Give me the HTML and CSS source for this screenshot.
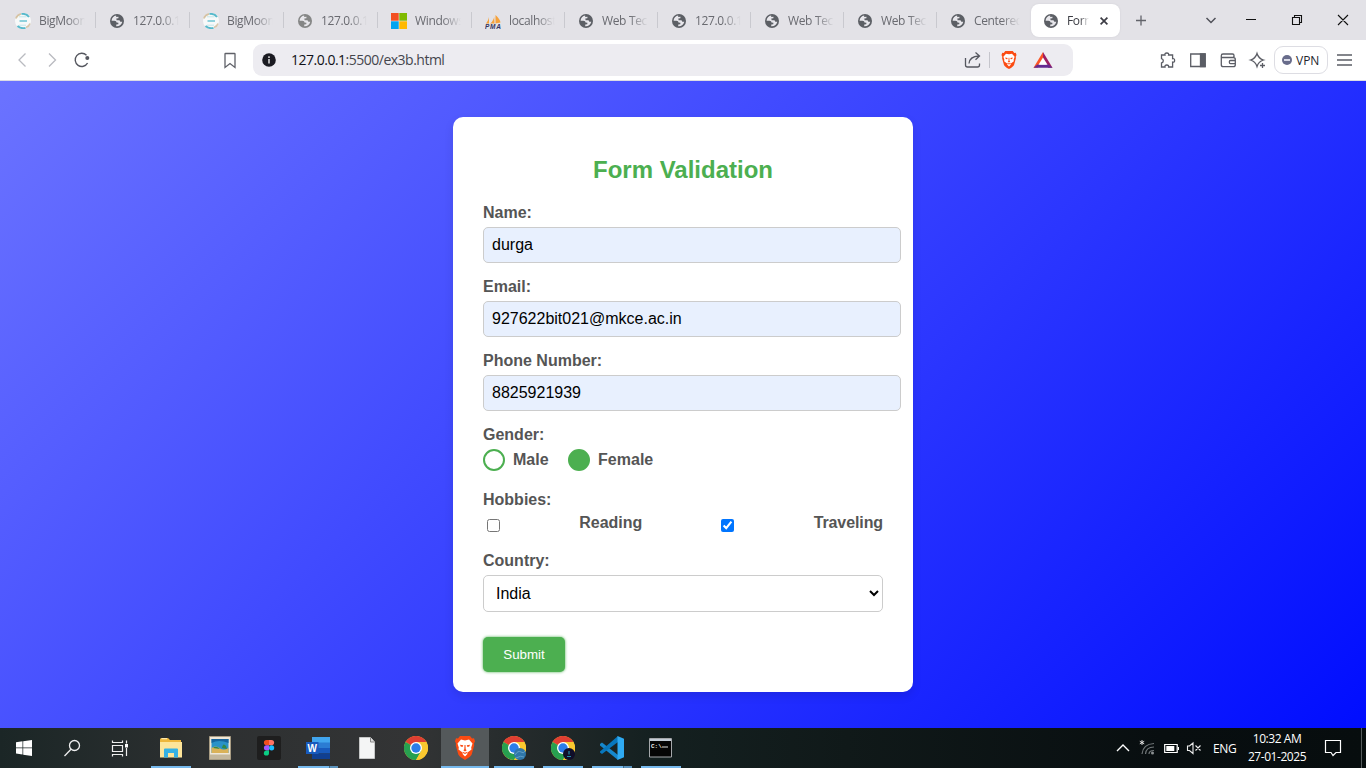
FILE: index.html
```html
<!DOCTYPE html>
<html lang="en">
<head>
<meta charset="utf-8">
<title>Form Validation</title>
<link rel="stylesheet" href="styles.css">
</head>
<body>
<svg width="0" height="0" class="defs">
  <defs>
    <symbol id="globe" viewBox="0 0 14 14"><circle cx="7" cy="7" r="7" fill="currentColor"/><path d="M6.2 1.6C3.700 2 1.700 4 1.600 6.700L4.500 6.700Q6.600 6.800 6.500 8.600L8.400 8.700 8.300 10.200 6.300 10.400 6.200 12.300C9.300 12.600 11.800 10.600 12.300 7.800L10.300 7.700 9.500 6.300 6.600 6.200 6.300 4.500 8.400 4.200 8.500 2.800 6.200 2.900Z" fill="#e8e7ec"/></symbol>
    <symbol id="moon" viewBox="0 0 16 16"><circle cx="8" cy="8" r="8" fill="#f7f9f9"/><path d="M.8 5.500A7.500 7.500 0 0 1 6 .9" fill="none" stroke="#d6c3a4" stroke-width="1.600"/><path d="M6.500 1Q11.500 .3 14 4M2.500 13Q6 16 10.500 14.800" fill="none" stroke="#56b9cb" stroke-width="1.900"/><path d="M11 14.500Q14 13.500 15 10.500" fill="none" stroke="#d8c6aa" stroke-width="1.600"/><path d="M4 3.800h7.500M4 12.200h7" stroke="#c2e5ea" stroke-width="1"/><path d="M4.500 8h7.500" stroke="#8fd1dc" stroke-width="2"/></symbol>
    <symbol id="lion" viewBox="0 0 20 24"><path d="M5 0h10l2 2.500 2-.2 1 3-1 2.200.2 2-2.500 9Q16 20.500 10 24 4 20.500 3.300 18.500L.8 9.500 1 7.500 0 5.300l1-3 2 .2z" fill="#fb4b12"/><path d="M6 3.600l4 .8 4-.8 3.500 4-1.300 3.900.3 2-4 3-.3 1.800L10 20.500l-2.200-2.200-.3-1.800-4-3 .3-2L2.500 7.600z" fill="#fff"/><path d="M5 8.700l3.300.6-.8 1.700-1.800-.4zM15 8.700l-3.300.6.8 1.700 1.800-.4zM9.500 9h1l.2 4.300 1 .9-1.700 1.200-1.700-1.200 1-.9zM7.500 15.800l2.500 1 2.500-1-.5 1.200-2 1-2-1z" fill="#fb4b12"/></symbol>
    <symbol id="chrome" viewBox="0 0 24 24"><circle cx="12" cy="12" r="12" fill="#fbc82f"/><path d="M12 12L1.600 6A12 12 0 0 1 22.400 6z" fill="#df3e32"/><path d="M1.600 6A12 12 0 0 0 12 24L17.200 15z" fill="#27a050"/><path d="M12 6h10.400A12 12 0 0 1 12 24l5.200-9z" fill="#fbc82f"/><circle cx="12" cy="12" r="6" fill="#fff"/><circle cx="12" cy="12" r="4.700" fill="#2b7de9"/></symbol>
  </defs>
</svg>

<header class="tabs">
  <div class="tab wideicon"><svg class="fav big"><use href="#moon"/></svg><span>BigMoon</span></div>
  <div class="tab"><svg class="fav"><use href="#globe"/></svg><span>127.0.0.1</span></div>
  <div class="tab wideicon"><svg class="fav big"><use href="#moon"/></svg><span>BigMoon</span></div>
  <div class="tab"><svg class="fav light"><use href="#globe"/></svg><span>127.0.0.1</span></div>
  <div class="tab wideicon"><svg class="fav big" viewBox="0 0 16 16"><path d="M0 0h7.700v7.700H0z" fill="#f25022"/><path d="M8.300 0H16v7.700H8.300z" fill="#7fba00"/><path d="M0 8.300h7.700V16H0z" fill="#00a4ef"/><path d="M8.300 8.300H16V16H8.300z" fill="#ffb900"/></svg><span>Windows</span></div>
  <div class="tab narrow wideicon"><svg class="fav big" viewBox="0 0 16 16"><path d="M4 1.500Q4.500 6 1 10.500H4zM9 .5Q10 7 5 10.500H9.500zM10.500 2Q15 6 15.500 9.500L10.500 10.500z" fill="#f6a13a"/><text x="0" y="15.500" class="pma" textLength="16">PMA</text></svg><span>localhost</span></div>
  <div class="tab narrow"><svg class="fav"><use href="#globe"/></svg><span>Web Tech</span></div>
  <div class="tab narrow"><svg class="fav"><use href="#globe"/></svg><span>127.0.0.1</span></div>
  <div class="tab narrow"><svg class="fav"><use href="#globe"/></svg><span>Web Tech</span></div>
  <div class="tab narrow"><svg class="fav"><use href="#globe"/></svg><span>Web Tech</span></div>
  <div class="tab narrow last"><svg class="fav"><use href="#globe"/></svg><span>Centered</span></div>
  <div class="tab active"><svg class="fav"><use href="#globe"/></svg><span>Form</span><svg class="close" viewBox="0 0 8 8"><path d="M.6.600l6.800 6.800M7.400.600L.6 7.400" stroke="#3c3c44" stroke-width="1.700"/></svg></div>
  <svg class="window" width="246" height="40" viewBox="1120 0 246 40" fill="none"><path d="M1136 20.500h10M1141 15.500v10" stroke="#62636a" stroke-width="1.300"/><path d="M1206.500 18l4.500 4.500 4.500-4.500" stroke="#505158" stroke-width="1.500"/><path d="M1246 19.500h10M1292.500 17.500h7v7h-7zM1294.500 17.500v-2h7v7h-2M1338 15l10 10M1348 15l-10 10" stroke="#111" stroke-width="1.100"/></svg>
</header>

<nav class="toolbar">
  <svg class="nav-icons" width="253" height="40" viewBox="0 40 253 40" fill="none">
    <path d="M25.500 53.500L19 60l6.500 6.500M49 53.500l6.500 6.500-6.500 6.500" stroke="#b9bac0" stroke-width="1.300"/>
    <path d="M86.500 55.200A6.600 6.600 0 1 0 87.600 63" stroke="#55575f" stroke-width="1.400"/><circle cx="87.300" cy="58" r="2" fill="#55575f"/>
    <path d="M225.500 53.500h9q.5 0 .5.500v13.500l-5-4-5 4V54q0-.5.500-.5z" stroke="#5f6168" stroke-width="1.300"/>
  </svg>
  <div class="address">
    <svg width="14" height="14" viewBox="0 0 14 14"><circle cx="7" cy="7" r="6.800" fill="#1b1b22"/><path d="M7 6v4.500M7 3.300v1.600" stroke="#eee" stroke-width="1.400"/></svg>
    <p class="url"><b>127.0.0.1</b>:5500/ex3b.html</p>
    <svg class="share" width="90" height="20" viewBox="963 50 90 20" fill="none"><path d="M965.500 58v7q0 2 2 2h10q2 0 2-2v-1.500M969 63.500Q969.500 56.500 979 56M975.500 52.500L979.500 56l-4 3.800" stroke="#55575f" stroke-width="1.300"/><path d="M989.500 52v16" stroke="#c5c5cc"/><svg x="1001" y="51" width="16" height="18"><use href="#lion"/></svg><path d="M1043 52l-9.500 15.800h4.200l5.300-8.500z" fill="#fb5424"/><path d="M1043 52l9.500 15.800h-4.200l-5.300-8.500z" fill="#9d1f63"/><path d="M1033.500 67.800h19l-4-3.300h-11z" fill="#642b91"/><path d="M1043 57.500l-4.500 7.200h9z" fill="#fff"/></svg>
  </div>
  <svg class="extensions" width="116" height="40" viewBox="1155 40 116 40" fill="none" stroke="#5b5d65" stroke-width="1.300"><path d="M1161.500 55h3.500q-.5-2 1.800-2 2.300 0 1.800 2h4v3.700q2-.5 2 1.700t-2 1.700V67h-4q.3-2-1.800-2-2.100 0-1.800 2h-3.500v-4q1.800-.3 1.800-2.200 0-1.900-1.800-2.200z"/><path d="M1190.700 54h14.500v12.500h-14.500z"/><path d="M1200.500 54h4.500v12.500h-4.500z" fill="#5b5d65"/><path d="M1234 57.500v-2q0-1.500-1.500-1.500h-9.500q-1.700 0-1.700 1.700v9q0 2 2 2h10q2 0 2-2v-5.200q0-2-2-2h-12M1235 60.500h-4.500q-1.200 0-1.200 1.600t1.200 1.600h4.500"/><path d="M1257 53.500Q1258.500 58.500 1263.500 60 1258.500 61.500 1257 66.500 1255.500 61.500 1250.500 60 1255.500 58.500 1257 53.500z"/><path d="M1262.500 63v5M1260 65.500h5"/></svg>
  <div class="vpn"><i></i><span>VPN</span></div>
  <svg class="menu" width="16" height="12" viewBox="0 0 16 12"><path d="M0 1h15M0 6h15M0 11h15" stroke="#5b5d65" stroke-width="1.300"/></svg>
</nav>

<main class="page">
  <form class="card" onsubmit="return false">
    <h2>Form Validation</h2>
    <label class="caption" for="name">Name:</label>
    <input class="field" id="name" type="text" value="durga">
    <label class="caption" for="email">Email:</label>
    <input class="field" id="email" type="email" value="927622bit021@mkce.ac.in">
    <label class="caption" for="phone">Phone Number:</label>
    <input class="field" id="phone" type="text" value="8825921939">
    <span class="caption">Gender:</span>
    <div class="genders">
      <label><input type="radio" name="gender">Male</label>
      <label><input type="radio" name="gender" checked>Female</label>
    </div>
    <span class="caption">Hobbies:</span>
    <div class="hobbies">
      <input type="checkbox" id="reading"><label for="reading">Reading</label>
      <input type="checkbox" id="traveling" checked><label for="traveling">Traveling</label>
    </div>
    <label class="caption" for="country">Country:</label>
    <select id="country"><option>India</option></select>
    <button>Submit</button>
  </form>
</main>

<footer class="taskbar">
  <div class="slot"><svg width="16" height="16" viewBox="0 0 16 16" fill="#fff"><path d="M0 2.200l6.500-.9v6.200H0zM7.200 1.200L16 0v7.500H7.200zM0 8.200h6.500v6.300L0 13.600zM7.200 8.200H16V16l-8.800-1.300z"/></svg></div>
  <div class="slot"><svg width="18" height="18" viewBox="0 0 18 18" fill="none" stroke="#eee" stroke-width="1.300"><circle cx="11.500" cy="6.500" r="5"/><path d="M8 10.300L1.500 17"/></svg></div>
  <div class="slot"><svg width="18" height="18" viewBox="0 0 18 18" fill="none" stroke="#eee" stroke-width="1.200"><path d="M1.500 1.500v2h10v-2M1.500 6.500h10v6h-10zM1.500 17.500v-2h10v2M15.500 1.500v3M15.500 9v8"/><path d="M14 5h3v3.500h-3z" fill="#fff" stroke="none"/></svg></div>
  <div class="slot app open"><svg width="24" height="22" viewBox="0 0 24 22"><path d="M1 2.500Q1 1 2.500 1H9l2 2h11v17H1z" fill="#eeb73c"/><path d="M1 5h22v15.500H1z" fill="#fde59a"/><path d="M2.500 1.700H8" stroke="#fff3c5"/><path d="M5 20.500v-8q0-1 1-1h12q1 0 1 1v8h-4V16h-6v4.500z" fill="#35b1e4"/></svg></div>
  <div class="slot"><svg width="22" height="24" viewBox="0 0 22 24"><path d="M.5.500h21v23H.5z" fill="#eee7d8" stroke="#a89c83"/><path d="M2.500 3h17v14h-17z" fill="#2992c8"/><path d="M2.500 3h17v4Q10 3 2.500 7z" fill="#16659e"/><path d="M2.500 12q4-3 8 0t9 0v5h-17z" fill="#dab258"/><path d="M4 12q3-3 7 1zM13 12q1-6 4-2l1 3z" fill="#31894b"/><path d="M1 18.500h20V23H1z" fill="#c3b79c"/></svg></div>
  <div class="slot"><svg width="24" height="24" viewBox="0 0 24 24"><rect width="24" height="24" rx="2" fill="#1e1e1e"/><path d="M12 4H9.500a2.600 2.600 0 0 0 0 5.200H12z" fill="#f24e1e"/><path d="M12 4h2.500a2.600 2.600 0 0 1 0 5.200H12z" fill="#ff7262"/><path d="M12 9.200H9.500a2.600 2.600 0 0 0 0 5.200H12z" fill="#a259ff"/><circle cx="14.600" cy="11.800" r="2.600" fill="#1abcfe"/><path d="M12 14.400H9.500A2.600 2.600 0 1 0 12 17z" fill="#0acf83"/></svg></div>
  <div class="slot app open stacked"><svg width="24" height="22" viewBox="0 0 24 22"><path d="M6 0h18v6H6z" fill="#41a5ee"/><path d="M6 5.500h18V11H6z" fill="#2b7cd3"/><path d="M6 11h18v5.500H6z" fill="#185abd"/><path d="M6 16.500h18V22H6z" fill="#103f91"/><path d="M0 5h12.500v12H0z" fill="#185abd"/><text x="1.500" y="14.500" class="letter">W</text></svg></div>
  <div class="slot"><svg width="16" height="22" viewBox="0 0 16 22"><path d="M.5.500h11L15.500 5v16.500H.5z" fill="#f4f5f5" stroke="#c6c7c7"/><path d="M11.500.500V5h4" fill="#ddd" stroke="#888"/></svg></div>
  <div class="slot"><svg width="24" height="24"><use href="#chrome"/></svg></div>
  <div class="slot app open current"><svg width="20" height="24"><use href="#lion"/></svg></div>
  <div class="slot app open"><svg width="24" height="24"><use href="#chrome"/><circle cx="18" cy="18" r="6" fill="#2f77a9"/><path d="M13 19q3-5 6-3t4-1M14 22q5-3 8-1" stroke="#76afd5" stroke-width=".7" fill="none"/></svg></div>
  <div class="slot app open"><svg width="24" height="24"><use href="#chrome"/><circle cx="18" cy="18" r="6" fill="#100e29"/><path d="M18 15v3.500M16 20.500h4" stroke="#238ca6" stroke-width="1.200"/></svg></div>
  <div class="slot app open stacked"><svg width="24" height="24" viewBox="0 0 24 24"><path d="M0 8l2-1.500L18 19v5L0 9.500z" fill="#1687cc"/><path d="M0 15.500L18 0v6L2 18l-2-1.500z" fill="#0877bd"/><path d="M17.500 0L24 2.800v18.400L17.500 24z" fill="#2faaf2"/></svg></div>
  <div class="slot app open cmd"><svg width="23" height="20" viewBox="0 0 23 20"><path d="M.5.500h22v18.500H.5z" fill="#050505" stroke="#a4a7aa"/><path d="M1 1h21v2H1z" fill="#c3ccd6"/><text x="2" y="9.500" class="prompt">C:\</text><path d="M13 9h6" stroke="#ddd"/></svg></div>

  <svg class="tray" width="90" height="20" viewBox="1115 738 90 20" fill="none"><path d="M1117 751l6-6 6 6" stroke="#fff" stroke-width="1.400"/><path d="M1142 740v5M1139.800 741.300l4.400 2.500M1144.200 741.300l-4.400 2.500" stroke="#eee" stroke-width=".9"/><path d="M1142 754Q1143 744 1154 743.500M1145.500 754Q1146 747 1154 747M1149 754Q1149 750.500 1154 750.500" stroke="#72787a" stroke-width="1.200"/><circle cx="1152.500" cy="753" r="1.500" fill="#8b9092"/><path d="M1164.700 744.500h12.500v8h-12.500z" stroke="#fff" stroke-width="1.200"/><path d="M1166.300 746h8v5h-8z" fill="#fff"/><path d="M1178.500 747v3" stroke="#fff"/><path d="M1187.500 746h2l3.500-3v10.500l-3.500-3h-2zM1195.500 745.500l5 5M1200.500 745.500l-5 5" stroke="#eee" stroke-width="1.100"/></svg>
  <span class="lang">ENG</span>
  <div class="clock"><span>10:32 AM</span><span>27-01-2025</span></div>
  <svg class="notice" width="18" height="18" viewBox="0 0 18 18"><path d="M1.500 1.500h15v12H12L9 16.500 7 13.500H1.500z" fill="none" stroke="#fff" stroke-width="1.200"/></svg>
  <i class="peek"></i>
</footer>
</body>
</html>
```
FILE: styles.css
```css
* { box-sizing: border-box; }
body { margin: 0; width: 1366px; height: 768px; overflow: hidden; display: flex; flex-direction: column; font-family: "Liberation Sans", Arial, sans-serif; }
svg { flex: none; display: block; }
.defs { position: absolute; }

.tabs { height: 40px; flex: none; background: #e3e2e7; display: flex; align-items: center; padding-left: 2px; font: 12px "Open Sans", sans-serif; color: #696a70; }
.tab { width: 94px; height: 16px; flex: none; display: flex; align-items: center; gap: 9px; padding-left: 14px; border-right: 1px solid #c9c9cf; }
.tab.narrow { width: 93px; }
.tab.wideicon { padding-left: 13px; gap: 8px; }
.tab.last { border: 0; }
.tab span { width: 46px; height: 18px; line-height: 18px; padding-top: 1px; overflow: hidden; white-space: nowrap; letter-spacing: -0.35px; -webkit-mask-image: linear-gradient(90deg, #000 60%, transparent); mask-image: linear-gradient(90deg, #000 60%, transparent); }
.fav { width: 14px; height: 14px; margin-top: 1px; color: #5c5f65; }
.fav.big { width: 16px; height: 16px; }
.fav.light { color: #858686; }
.pma { font: italic bold 6.5px "Liberation Sans", sans-serif; fill: #34345f; }
.tab.active { width: 89px; height: 33px; margin-left: 1px; padding-left: 13px; border: 0; border-radius: 8px; background: #fff; color: #3a3b42; box-shadow: 0 0 2px #cfced5; }
.tab.active span { width: 22px; }
.close { width: 8px; height: 8px; margin: 1px 0 0 2px; }

.toolbar { height: 41px; flex: none; background: #fff; border-bottom: 1px solid #dcdce4; display: flex; align-items: center; }
.address { width: 820px; height: 32px; border-radius: 9px; background: #edecf1; display: flex; align-items: center; padding-left: 9px; }
.url { margin: -1px 0 0 15px; width: 672px; font: 14px "Open Sans", sans-serif; letter-spacing: -0.5px; color: #45464d; }
.url b { font-weight: 400; color: #111118; }
.extensions { margin-left: 82px; }
.vpn { width: 54px; height: 28px; margin-left: 3px; border: 1px solid #dddde3; border-radius: 9px; display: flex; align-items: center; gap: 4px; padding-left: 7px; font: 12px "Open Sans", sans-serif; color: #24252c; }
.vpn i { width: 10px; height: 10px; border-radius: 50%; background: linear-gradient(#d9dae7, #d9dae7) center / 6px 2px no-repeat #686c8b; }
.menu { margin-left: 9px; }

.page { height: 647px; flex: none; background: linear-gradient(135deg, #6b73ff, #000dff); display: flex; justify-content: center; align-items: flex-start; padding-top: 36px; }
.card { width: 460px; height: 575px; padding: 39px 30px 20px; border-radius: 10px; background: #fff; box-shadow: 0 4px 10px rgba(0,0,0,.1); display: flex; flex-direction: column; align-items: flex-start; color: #555; font-size: 16px; font-weight: bold; }
.card h2 { width: 100%; margin: 0 0 20px; text-align: center; color: #4caf50; font-size: 24px; line-height: 27px; }
.caption { height: 18px; line-height: 20px; margin-bottom: 6px; }
.field { width: 418px; height: 36px; flex: none; margin: 0 0 14px; padding: 8px; border: 1px solid #ccc; border-radius: 5px; background: #e8f0fe; color: #000; font: 16px "Liberation Sans", sans-serif; }
.genders { height: 22px; display: flex; gap: 19.5px; margin-bottom: 19px; }
.genders label { display: flex; align-items: center; gap: 8px; line-height: 20px; height: 22px; }
.genders input { appearance: none; width: 22px; height: 22px; margin: 0; border: 2px solid #4caf50; border-radius: 50%; }
.genders input:checked { background: #4caf50; }
.hobbies { width: 100%; height: 18px; display: flex; justify-content: space-between; margin: -1px 0 20px; padding-left: 4px; line-height: 20px; }
.hobbies input { width: 13px; height: 13px; margin: 6px 0 0; }
.hobbies label:last-child { letter-spacing: -0.1px; }
.card select { width: 400px; height: 37px; flex: none; padding: 8px; border: 1px solid #ccc; border-radius: 5px; background: #fff; color: #000; font: 16px "Liberation Sans", sans-serif; }
.card button { width: 82px; height: 35px; margin-top: 25px; border: 0; border-radius: 5px; background: #4caf50; color: #fff; font: 13.333px "Liberation Sans", sans-serif; box-shadow: 0 0 3px #4caf50; }

.taskbar { height: 40px; flex: none; display: flex; align-items: center; background: linear-gradient(90deg, #1b2626 0, #2d3031 15%, #333435 30%, #252b2c 38%, #142020 48%, #101919 62%, #080e10 85%, #070d0e); color: #fff; font: 12px "Open Sans", sans-serif; }
.slot { width: 48px; height: 40px; flex: none; display: flex; align-items: center; justify-content: center; margin-right: 1px; }
.slot:nth-child(-n+2) { margin-right: 0; }
.slot:nth-child(3) { margin-right: 3px; }
.cmd { padding-right: 2px; }
.app.open { background: linear-gradient(#76b9ed, #76b9ed) 4px 38px / 40px 2px no-repeat; }
.app.stacked { background: linear-gradient(90deg, #76b9ed 31px, #416b86 31px, #416b86 32px, #5b93bd 32px) 4px 38px / 40px 2px no-repeat; }
.app.current { background: linear-gradient(#76b9ed, #76b9ed) 0 38px / 48px 2px no-repeat #54595b; }
.letter { font: bold 10px "Liberation Sans", sans-serif; fill: #fff; }
.prompt { font: bold 6px "Liberation Mono", monospace; fill: #eee; }
.tray { margin-left: auto; }
.lang { width: 24px; margin-left: 8px; letter-spacing: -0.4px; }
.clock { width: 60px; margin-left: 10px; display: flex; flex-direction: column; align-items: center; line-height: 18px; letter-spacing: -0.45px; white-space: nowrap; }
.notice { margin-left: 17px; }
.peek { width: 1px; height: 40px; margin: 0 4px 0 19px; background: #555b5c; }
```
